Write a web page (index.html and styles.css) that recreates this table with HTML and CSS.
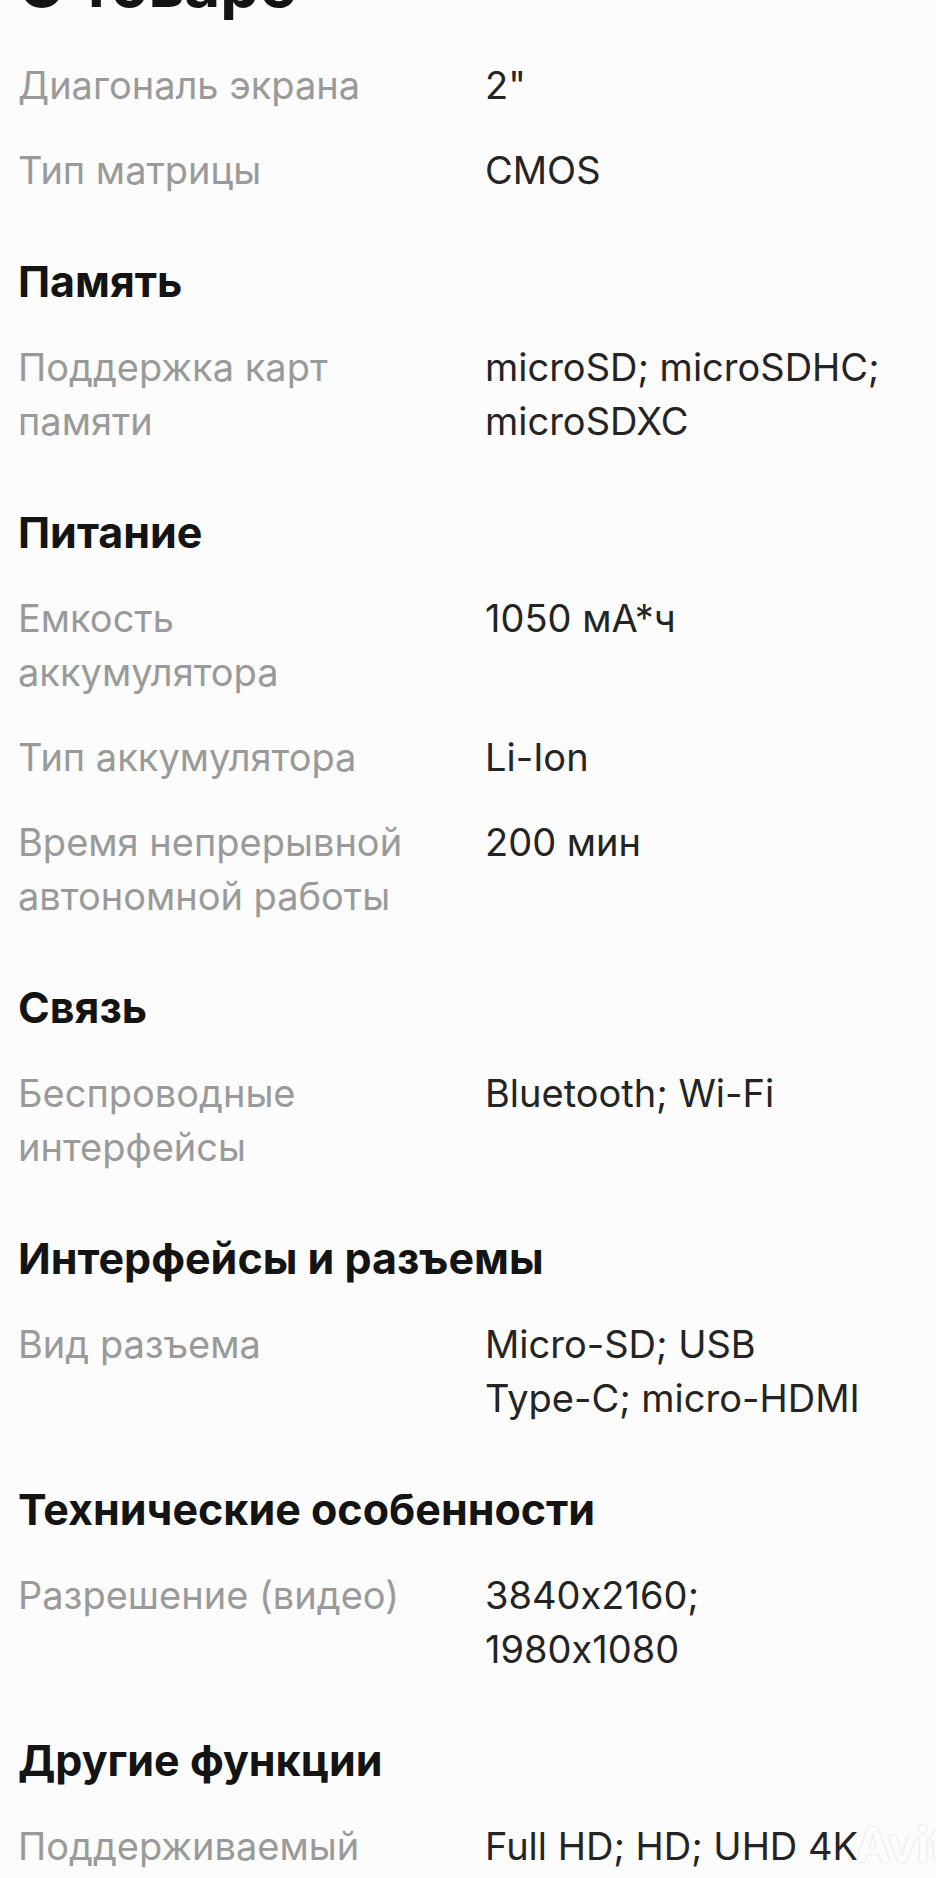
FILE: index.html
```html
<!DOCTYPE html>
<html lang="ru">
<head>
  <meta charset="UTF-8">
  <meta name="viewport" content="width=device-width, initial-scale=1.0">
  <title>О товаре</title>
  <link rel="stylesheet" href="styles.css">
</head>
<body>
  <main class="specs">
    <h2 class="specs-title">О товаре</h2>

    <section class="group first">
      <dl class="rows">
        <div class="row"><dt>Диагональ экрана</dt><dd>2"</dd></div>
        <div class="row"><dt>Тип матрицы</dt><dd>CMOS</dd></div>
      </dl>
    </section>

    <section class="group">
      <h3 class="group-title">Память</h3>
      <dl class="rows">
        <div class="row"><dt>Поддержка карт памяти</dt><dd>microSD; microSDHC; microSDXC</dd></div>
      </dl>
    </section>

    <section class="group">
      <h3 class="group-title">Питание</h3>
      <dl class="rows">
        <div class="row"><dt>Емкость аккумулятора</dt><dd>1050 мА*ч</dd></div>
        <div class="row"><dt>Тип аккумулятора</dt><dd>Li-Ion</dd></div>
        <div class="row"><dt>Время непрерывной автономной работы</dt><dd>200 мин</dd></div>
      </dl>
    </section>

    <section class="group">
      <h3 class="group-title">Связь</h3>
      <dl class="rows">
        <div class="row"><dt>Беспроводные интерфейсы</dt><dd>Bluetooth; Wi-Fi</dd></div>
      </dl>
    </section>

    <section class="group">
      <h3 class="group-title">Интерфейсы и разъемы</h3>
      <dl class="rows">
        <div class="row"><dt>Вид разъема</dt><dd><span class="nowrap">Micro-SD;</span> USB <span class="nowrap">Type-C;</span> <span class="nowrap">micro-HDMI</span></dd></div>
      </dl>
    </section>

    <section class="group">
      <h3 class="group-title">Технические особенности</h3>
      <dl class="rows">
        <div class="row"><dt>Разрешение (видео)</dt><dd>3840x2160; 1980x1080</dd></div>
      </dl>
    </section>

    <section class="group">
      <h3 class="group-title">Другие функции</h3>
      <dl class="rows">
        <div class="row"><dt>Поддерживаемый</dt><dd>Full HD; HD; UHD 4K</dd></div>
      </dl>
    </section>
  </main>

  <div class="watermark">Avito</div>
</body>
</html>
```

FILE: styles.css
```css
* {
  box-sizing: border-box;
  margin: 0;
  padding: 0;
}

body {
  background-color: #fcfcfc;
  font-family: Inter, "Noto Sans", sans-serif;
  font-feature-settings: "calt" 0;
  height: 1878px;
  overflow: hidden;
  position: relative;
}

.specs {
  display: flex;
  flex-direction: column;
  padding: 0 18px;
}

.specs-title {
  font-size: 62px;
  font-weight: 700;
  line-height: 1;
  color: #141414;
  margin-top: -46px;
}

.group {
  margin-top: 57px;
}

.group.first {
  margin-top: 42px;
}

.group-title {
  font-size: 43px;
  font-weight: 700;
  line-height: 54px;
  color: #141414;
  margin-bottom: 32px;
}

.rows {
  display: flex;
  flex-direction: column;
  gap: 31px;
}

.row {
  display: grid;
  grid-template-columns: 410px 405px;
  column-gap: 57px;
  font-size: 38px;
  line-height: 54px;
}

.row dt {
  color: #9a9a9a;
}

.row dd {
  color: #242424;
}

.nowrap {
  white-space: nowrap;
}

.watermark {
  position: absolute;
  right: -40px;
  bottom: 4px;
  font-size: 48px;
  font-weight: 700;
  color: #fcfcfc;
  text-shadow: 0 0 2px #c4c4c4;
  opacity: 0.8;
}
```
